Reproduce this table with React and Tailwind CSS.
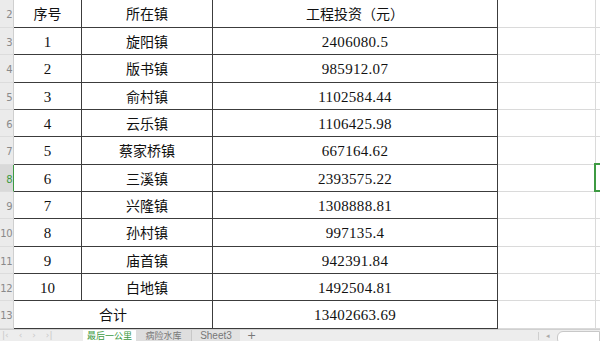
const rows = [
  { no: '1', town: '旋阳镇', amount: '2406080.5' },
  { no: '2', town: '版书镇', amount: '985912.07' },
  { no: '3', town: '俞村镇', amount: '1102584.44' },
  { no: '4', town: '云乐镇', amount: '1106425.98' },
  { no: '5', town: '蔡家桥镇', amount: '667164.62' },
  { no: '6', town: '三溪镇', amount: '2393575.22' },
  { no: '7', town: '兴隆镇', amount: '1308888.81' },
  { no: '8', town: '孙村镇', amount: '997135.4' },
  { no: '9', town: '庙首镇', amount: '942391.84' },
  { no: '10', town: '白地镇', amount: '1492504.81' },
];

// row heights of sheet rows 2..13
const heights = ['h-[28px]', 'h-[27px]', 'h-[28px]', 'h-[27px]', 'h-[27px]', 'h-[28px]', 'h-[27px]', 'h-[27px]', 'h-[28px]', 'h-[27px]', 'h-[27px]', 'h-[28px]'];

const cjk = "font-['Liberation_Serif','Noto_Sans_CJK_SC',serif]";

function RowHead({ n, active }) {
  return (
    <div
      className={`flex items-center justify-end pr-[1px] pt-[2px] text-[10px] tracking-[-0.5px] font-['DejaVu_Sans',sans-serif] border-b border-[#dcdcdc] ${
        active ? 'bg-[#d9d9d9] text-[#3d9a42] border-r border-r-[#3d9a42]' : 'bg-[#ebebeb] text-[#8a8a8a] border-r border-r-[#cfcfcf]'
      }`}
    >
      {n}
    </div>
  );
}

function Cell({ children, className = '' }) {
  return (
    <div className={`flex items-center justify-center pt-[2px] border-b border-r border-[#3c3c3c] text-[14px] text-[#111] ${cjk} ${className}`}>
      {children}
    </div>
  );
}

function Blank() {
  return (
    <>
      <div className="border-b border-r border-[#dadada]" />
      <div className="border-b border-[#dadada]" />
    </>
  );
}

const cols = 'grid grid-cols-[14px_68px_131px_285px_98px_1fr]';

export default function App() {
  return (
    <div className="relative w-[600px] h-[341px] overflow-hidden bg-white">
      <div className={`${cols} ${heights[0]}`}>
        <RowHead n="2" />
        <Cell>序号</Cell>
        <Cell>所在镇</Cell>
        <Cell>工程投资（元）</Cell>
        <Blank />
      </div>
      {rows.map((r, i) => (
        <div key={r.no} className={`${cols} ${heights[i + 1]}`}>
          <RowHead n={String(i + 3)} active={i + 3 === 8} />
          <Cell className="text-[15px]">{r.no}</Cell>
          <Cell>{r.town}</Cell>
          <Cell className="text-[15px] tracking-[0.3px]">{r.amount}</Cell>
          <Blank />
        </div>
      ))}
      <div className={`${cols} ${heights[11]}`}>
        <RowHead n="13" />
        <Cell className="col-span-2">合计</Cell>
        <Cell className="text-[15px] tracking-[0.3px]">13402663.69</Cell>
        <Blank />
      </div>

      {/* sheet tabs */}
      <div className="flex h-[12px] bg-[#ededed] border-t border-[#d0d0d0] text-[9px] leading-[11px] font-['Noto_Sans_CJK_SC',sans-serif]">
        <div className="flex w-[83px] items-start gap-[10px] pl-[2px] text-[#c9c9c9] text-[9px] font-['DejaVu_Sans',sans-serif]">
          <span>|‹</span>
          <span>‹</span>
          <span>›</span>
          <span>›|</span>
        </div>
        <div className="w-[53px] bg-white text-[#3d9a42] text-center whitespace-nowrap">最后一公里</div>
        <div className="w-[56px] bg-[#dedede] text-[#777] text-center border-r border-[#c8c8c8] whitespace-nowrap">病险水库</div>
        <div className="w-[48px] bg-[#e2e2e2] text-[#777] text-center text-[10px] font-['Liberation_Sans',sans-serif]">Sheet3</div>
        <div className="pl-[7px] text-[#777] text-[11px] leading-[11px] font-['DejaVu_Sans',sans-serif]">+</div>
        <div className="flex-1" />
        <div className="w-px h-[8px] mt-[2px] bg-[#cfcfcf]" />
        <div className="w-[18px] text-center text-[7px] leading-[10px] text-[#aaa]">◂</div>
        <div className="w-[43px] h-[14px] mt-[1px] bg-white border border-[#c8c8c8] rounded-l-[6px]" />
      </div>

      {/* selected cell E8 */}
      <div className="absolute left-[594px] top-[163px] w-[10px] h-[29px] border-2 border-[#3d9a42]" />
    </div>
  );
}
